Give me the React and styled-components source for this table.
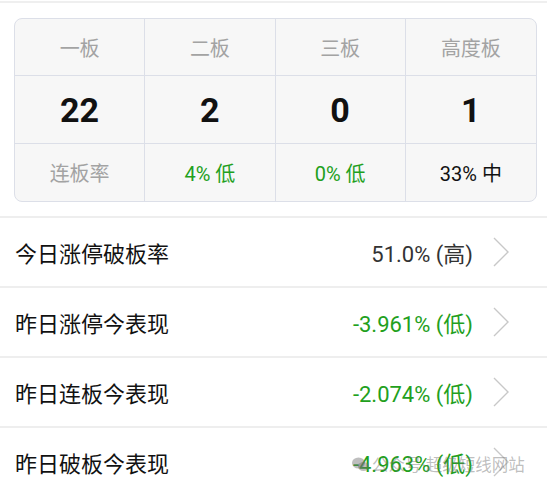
import React from "react";
import styled, { createGlobalStyle } from "styled-components";

const Global = createGlobalStyle`
  html, body { margin: 0; padding: 0; background: #fff; }
  body { font-family: Roboto, "Noto Sans CJK SC", sans-serif; }
`;

const Page = styled.div`
  position: relative;
  width: 547px;
  height: 488px;
  overflow: hidden;
  background: #fff;
`;

const TopRule = styled.div`
  height: 2px;
  margin-top: 1px;
  background: #efefef;
`;

const Table = styled.div`
  margin: 15px 10px 0 14px;
  display: grid;
  grid-template-columns: repeat(4, 1fr);
  grid-template-rows: 57px 68px 57px;
  background: #f7f7f7;
  border: 1px solid #dcdfe8;
  border-radius: 8px;
  overflow: hidden;
`;

const Cell = styled.div`
  display: flex;
  align-items: center;
  justify-content: center;
  border-right: ${(p) => (p.$last ? "none" : "1px solid #dcdfe8")};
  border-bottom: ${(p) => (p.$bottom ? "none" : "1px solid #dcdfe8")};
  font-size: ${(p) => p.$size}px;
  font-weight: ${(p) => (p.$bold ? 700 : 400)};
  color: ${(p) => p.$color};
`;

const List = styled.div`
  margin-top: 14px;
`;

const Row = styled.div`
  display: flex;
  align-items: center;
  height: 68px;
  border-top: 2px solid #eeeeee;
  padding: 0 38px 0 15px;
`;

const Label = styled.div`
  flex: 1;
  font-size: 22px;
  color: #111;
`;

const Value = styled.div`
  font-size: 22px;
  color: ${(p) => p.$color};
  margin-right: 20px;
`;

const Chevron = styled.svg`
  display: block;
  width: 16px;
  height: 30px;
`;

const Watermark = styled.div`
  position: absolute;
  left: 352px;
  top: 452px;
  display: flex;
  align-items: center;
  gap: 3px;
  font-size: 16.5px;
  color: rgba(110, 110, 110, 0.45);
  white-space: nowrap;
  pointer-events: none;
`;

const GREEN = "#22a01c";

const headers = ["一板", "二板", "三板", "高度板"];
const nums = ["22", "2", "0", "1"];
const rates = [
  { t: "连板率", c: "#a3a3a3" },
  { t: "4% 低", c: GREEN },
  { t: "0% 低", c: GREEN },
  { t: "33% 中", c: "#111" },
];

const rows = [
  { l: "今日涨停破板率", v: "51.0% (高)", c: "#333" },
  { l: "昨日涨停今表现", v: "-3.961% (低)", c: GREEN },
  { l: "昨日连板今表现", v: "-2.074% (低)", c: GREEN },
  { l: "昨日破板今表现", v: "-4.963% (低)", c: GREEN },
];

const WeChat = () => (
  <svg width="17" height="15" viewBox="0 0 17 15">
    <ellipse cx="6.5" cy="6" rx="6.5" ry="5.5" fill="rgba(110,110,110,0.45)" />
    <ellipse cx="11.5" cy="9.5" rx="5.5" ry="4.6" fill="rgba(110,110,110,0.45)" />
  </svg>
);

export default function App() {
  return (
    <Page>
      <Global />
      <TopRule />
      <Table>
        {headers.map((h, i) => (
          <Cell key={h} $last={i === 3} $size={20} $color="#a3a3a3">
            {h}
          </Cell>
        ))}
        {nums.map((n, i) => (
          <Cell key={"n" + i} $last={i === 3} $size={34} $bold $color="#111">
            {n}
          </Cell>
        ))}
        {rates.map((r, i) => (
          <Cell key={"r" + i} $last={i === 3} $bottom $size={20} $color={r.c}>
            {r.t}
          </Cell>
        ))}
      </Table>
      <List>
        {rows.map((r) => (
          <Row key={r.l}>
            <Label>{r.l}</Label>
            <Value $color={r.c}>{r.v}</Value>
            <Chevron viewBox="0 0 16 30">
              <polyline points="1,1 15,15 1,29" fill="none" stroke="#c8c8c8" strokeWidth="1.4" />
            </Chevron>
          </Row>
        ))}
      </List>
      <Watermark>
        <WeChat />
        <span>公众号·超级短线网站</span>
      </Watermark>
    </Page>
  );
}
